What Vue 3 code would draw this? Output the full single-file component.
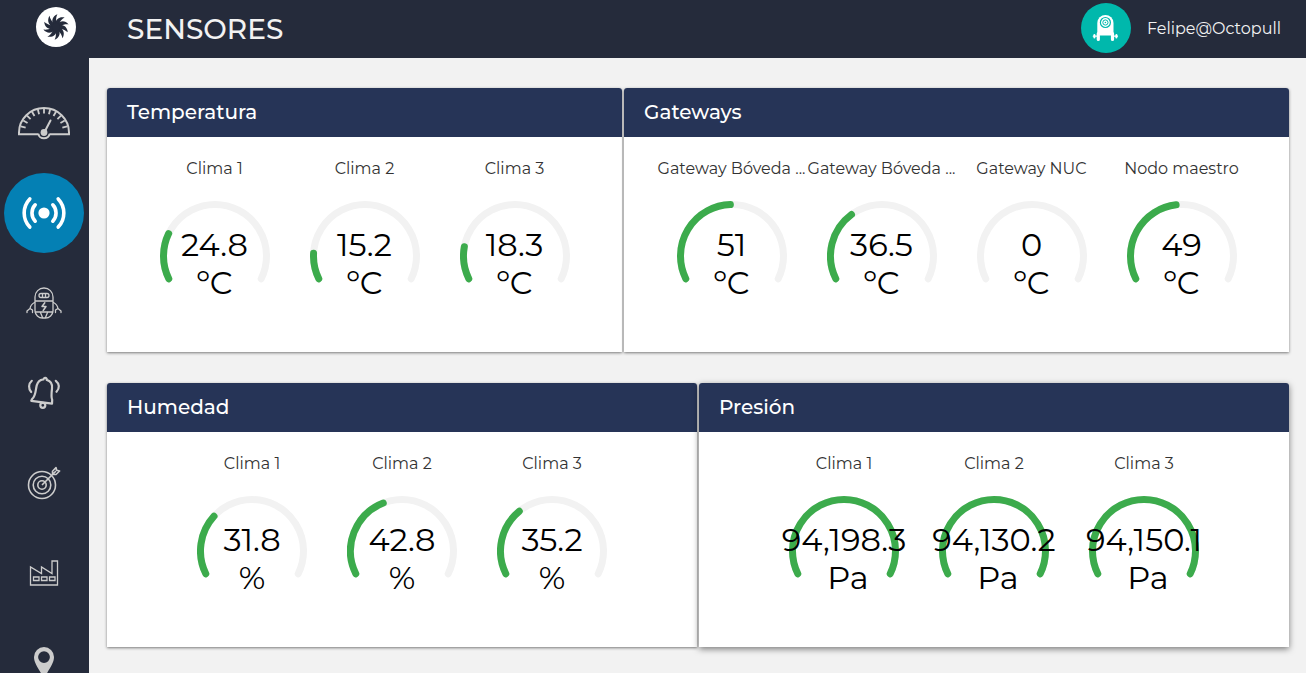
<script setup>
const rows = [
  [
    { title: 'Temperatura', unit: 'ºC', sensors: [
      { name: 'Clima 1', value: 24.8 },
      { name: 'Clima 2', value: 15.2 },
      { name: 'Clima 3', value: 18.3 }
    ] },
    { title: 'Gateways', unit: 'ºC', sensors: [
      { name: 'Gateway Bóveda ...', value: 51 },
      { name: 'Gateway Bóveda ...', value: 36.5 },
      { name: 'Gateway NUC', value: 0 },
      { name: 'Nodo maestro', value: 49 }
    ] }
  ],
  [
    { title: 'Humedad', unit: '%', sensors: [
      { name: 'Clima 1', value: 31.8 },
      { name: 'Clima 2', value: 42.8 },
      { name: 'Clima 3', value: 35.2 }
    ] },
    { title: 'Presión', unit: 'Pa', raised: true, sensors: [
      { name: 'Clima 1', value: 94198.3 },
      { name: 'Clima 2', value: 94130.2 },
      { name: 'Clima 3', value: 94150.1 }
    ] }
  ]
]

const START = -116.2
const SWEEP = 232.4
const RADIUS = 51.5

function point(angle) {
  const a = (angle * Math.PI) / 180
  return `${(55 + RADIUS * Math.sin(a)).toFixed(2)} ${(55 - RADIUS * Math.cos(a)).toFixed(2)}`
}

function arc(sweep) {
  return `M${point(START)}A${RADIUS} ${RADIUS} 0 ${sweep > 180 ? 1 : 0} 1 ${point(START + sweep)}`
}

const track = arc(SWEEP)

function progress(value) {
  return arc(Math.min(SWEEP, Math.max(0, value * 2.38 - 7)))
}

function format(value) {
  return value.toLocaleString('en-US')
}

const ticks = [-75, -60, -45, -30, -15, 0, 15, 30, 45, 60, 75]
const blades = [0, 36, 72, 108, 144, 180, 216, 252, 288, 324]
</script>

<template>
  <div class="shell">
    <header class="topbar">
      <a class="logo" href="#" aria-label="Octopull">
        <svg width="40" height="40" viewBox="0 0 40 40">
          <circle cx="20" cy="20" r="20" fill="#fff" />
          <circle cx="20" cy="20" r="5.5" fill="#252b3b" />
          <path
            v-for="b in blades"
            :key="b"
            d="M17 17C15.4 13.500 16.6 9 21.400 7.200C20.200 9.300 19.800 12.600 20.300 15.600Z"
            fill="#252b3b"
            :transform="`rotate(${b} 20 20)`"
          />
        </svg>
      </a>
      <h1>SENSORES</h1>
      <a class="user" href="#">
        <svg width="50" height="50" viewBox="0 0 50 50">
          <circle cx="25" cy="25" r="25" fill="#00b8ac" />
          <path d="M16.300 30V20a8.100 8.100 0 0 1 16.200 0v10l-2.500 2.500H19Z" fill="#fff" />
          <circle cx="24.400" cy="19.500" r="5" fill="none" stroke="#00b8ac" stroke-width="1.200" />
          <circle cx="24.400" cy="19.500" r="2.600" fill="none" stroke="#00b8ac" stroke-width="1" />
          <circle cx="24.400" cy="19.500" r=".8" fill="#00b8ac" />
          <g stroke="#fff" stroke-linecap="round" fill="none">
            <path d="M17.300 30.500v6M31.500 30.500v6" stroke-width="3.200" />
            <path d="M13.400 32v2.500M35.400 32v2.500" stroke-width="2" />
            <path d="M12.300 33.200h5M31.500 33.200h5" stroke-width="1.200" />
          </g>
        </svg>
        <span>Felipe@Octopull</span>
      </a>
    </header>

    <div class="body">
      <nav class="sidebar">
        <a href="#" aria-label="Panel">
          <svg width="52" height="34" viewBox="0 0 52 34" fill="none" stroke="#ccc" stroke-width="2">
            <path d="M20.500 28.200H1V26.500a25 24.500 0 0 1 50 0v1.700H31.500" />
            <path
              v-for="t in ticks"
              :key="t"
              d="M26 2.500v5"
              stroke-width="1.800"
              :transform="`rotate(${t} 26 26.500)`"
            />
            <path d="M20.500 27.800a5.500 4.500 0 0 0 11 0" />
            <path d="M26 27 32.500 14.500" stroke-linecap="round" />
            <circle cx="26" cy="26.500" r="3.400" fill="#ccc" stroke="none" />
          </svg>
        </a>
        <a class="active" href="#" aria-label="Sensores" aria-current="page">
          <svg width="44" height="34" viewBox="0 0 44 34" fill="none" stroke="#fff" stroke-width="3.600" stroke-linecap="round">
            <circle cx="22" cy="17" r="5.600" fill="#fff" stroke="none" />
            <path d="M13.200 8.800a12 12 0 0 0 0 16.400M7.800 2.900C.3 10.800.3 23.200 7.800 31.100" />
            <path d="M30.800 8.800a12 12 0 0 1 0 16.400M36.200 2.900c7.500 7.900 7.500 20.300 0 28.200" />
          </svg>
        </a>
        <a href="#" aria-label="Robots">
          <svg width="36" height="34" viewBox="0 0 36 34" fill="none" stroke="#ccc" stroke-width="1.300" stroke-linejoin="round" stroke-linecap="round">
            <path d="M9 25V11a9 9 0 0 1 18 0v14a7.500 7.500 0 0 1-7.500 7h-3A7.500 7.500 0 0 1 9 25ZM9 15h18M9 26h18" />
            <rect x="13" y="7.500" width="10" height="4" rx="2" />
            <path d="M16.500 8v3M19.500 8v3M14.500 26.500l2 5M21.500 26.500l-2 5" />
            <path d="M18.800 16.800 16 20.500h4l-2.800 4" stroke-width="1.500" />
            <path d="M8.500 16.500C5.500 18 4.500 19.500 4 22.500L1 25v1.500M4 22.500 6.500 24v2.500M27.500 16.500c3 1.500 4 3 4.500 6l3 2.500v1.500M32 22.500 29.500 24v2.500" />
          </svg>
        </a>
        <a href="#" aria-label="Alarmas">
          <svg width="34" height="34" viewBox="0 0 34 34" fill="none" stroke="#ccc" stroke-width="2.200" stroke-linejoin="round" stroke-linecap="round">
            <path d="M13.500 4.300c1-.6 2-.7 3-.8.200-2.300 3.300-2 3.300.4 4 1.200 5.700 4.400 5.200 8.600-.7 6-.9 9 .2 11.400l-.2 3.800L4.300 24.800l.7-1.600c3-2.300 3.500-6.500 4.200-11.200.5-3.700 1.500-6.300 4.300-7.700Z" />
            <circle cx="15.800" cy="29.300" r="2.500" />
            <path d="M4.800 4.800C1.400 7.800 1.200 12.500 4.200 16M28.800 4.800c3.800 3 4 7.500.7 11" />
          </svg>
        </a>
        <a href="#" aria-label="Objetivos">
          <svg width="34" height="34" viewBox="0 0 34 34" fill="none" stroke="#ccc" stroke-width="1.600" stroke-linejoin="round">
            <circle cx="15" cy="19" r="13.500" />
            <circle cx="15" cy="19" r="8.800" />
            <circle cx="15" cy="19" r="4.200" />
            <path d="M15 19 29 5M25.500 8.500V5.200L29 1.500l.7 2.800 2.900.7-3.600 3.500Z" />
          </svg>
        </a>
        <a href="#" aria-label="Fábrica">
          <svg width="30" height="28" viewBox="0 0 30 28" fill="none" stroke="#ccc" stroke-width="1.300">
            <path d="M1.500 26V8l11 6.500V8L23 14.500V2h5.500v24Z" />
            <path d="M4.500 18H10v3.500H4.500ZM12.500 18H18v3.500h-5.500ZM20.500 18H26v3.500h-5.500Z" />
          </svg>
        </a>
        <a href="#" aria-label="Mapa">
          <svg width="22" height="32" viewBox="0 0 22 32">
            <path fill="#ccc" fill-rule="evenodd" d="M11 0a10 10 0 0 0-10 10c0 7 6 13 10 22 4-9 10-15 10-22A10 10 0 0 0 11 0Zm0 4.200a5.900 5.900 0 1 1 0 11.800 5.900 5.900 0 0 1 0-11.800Z" />
          </svg>
        </a>
      </nav>

      <main>
        <div v-for="(row, r) in rows" :key="r" class="row">
          <section v-for="card in row" :key="card.title" class="card" :class="{ raised: card.raised }">
            <h2>{{ card.title }}</h2>
            <div class="sensors">
              <div v-for="(s, i) in card.sensors" :key="i" class="sensor">
                <div class="name">{{ s.name }}</div>
                <div class="gauge">
                  <svg width="110" height="110" viewBox="0 0 110 110" fill="none" stroke-width="7" stroke-linecap="round">
                    <path :d="track" stroke="#f2f2f2" />
                    <path v-if="s.value > 0" :d="progress(s.value)" stroke="#3cab4c" />
                  </svg>
                  <div class="reading">
                    <span>{{ format(s.value) }}</span>
                    <span :class="{ pascal: card.unit === 'Pa' }">{{ card.unit }}</span>
                  </div>
                </div>
              </div>
            </div>
          </section>
        </div>
      </main>
    </div>
  </div>
</template>

<style>
body {
  margin: 0;
  background: #f2f2f2;
}
</style>

<style scoped>
.shell {
  display: flex;
  flex-direction: column;
  height: 100vh;
  overflow: hidden;
  font-family: Montserrat, Inter, "Liberation Sans", sans-serif;
}
.topbar {
  display: flex;
  align-items: center;
  flex: none;
  height: 58px;
  padding: 0 25px 0 36px;
  background: #252b3b;
  box-sizing: border-box;
}
.logo {
  display: flex;
  padding-bottom: 4px;
}
h1 {
  margin: 0 auto 0 51px;
  color: #f2f2f2;
  font-size: 28px;
  font-weight: 500;
  line-height: 40px;
}
.user {
  display: flex;
  align-items: center;
  gap: 16px;
  padding-bottom: 2px;
  color: #f2f2f2;
  font-size: 16px;
  text-decoration: none;
}
.body {
  display: flex;
  flex: 1;
  min-height: 0;
}
.sidebar {
  display: flex;
  flex-direction: column;
  flex: none;
  gap: 10px;
  padding: 25px 5px 0 4px;
  background: #252b3b;
  overflow: hidden;
}
.sidebar a {
  display: flex;
  align-items: center;
  justify-content: center;
  flex: none;
  width: 80px;
  height: 80px;
  border-radius: 50%;
}
.sidebar .active {
  background: #0480b4;
}
main {
  flex: 1;
  min-width: 0;
  padding: 30px 17px 0 18px;
  overflow: hidden;
  background: #f2f2f2;
}
.row {
  display: flex;
  gap: 2px;
  margin-bottom: 31px;
}
.card {
  flex: 1 0 auto;
  background: #fff;
  border-radius: 3px 3px 0 0;
  box-shadow: 0 1px 3px rgba(0, 0, 0, 0.5);
}
.raised {
  box-shadow: 0 2px 6px rgba(0, 0, 0, 0.5);
}
h2 {
  margin: 0;
  padding: 0 20px;
  border-radius: 3px 3px 0 0;
  background: #263457;
  color: #fff;
  font-size: 20px;
  font-weight: 500;
  line-height: 49px;
}
.sensors {
  display: flex;
  justify-content: center;
  height: 194px;
  padding-top: 21px;
}
.sensor {
  width: 150px;
}
.name {
  color: #333;
  font-size: 16px;
  line-height: 22px;
  text-align: center;
  white-space: nowrap;
}
.gauge {
  display: grid;
  justify-content: center;
  margin-top: 21px;
}
.gauge svg,
.reading {
  grid-area: 1 / 1;
}
.gauge svg {
  justify-self: center;
}
.reading {
  display: flex;
  flex-direction: column;
  align-items: center;
  padding-top: 25px;
  color: #000;
  font-size: 32px;
  line-height: 38px;
}
.pascal {
  padding-left: 8px;
}
</style>
